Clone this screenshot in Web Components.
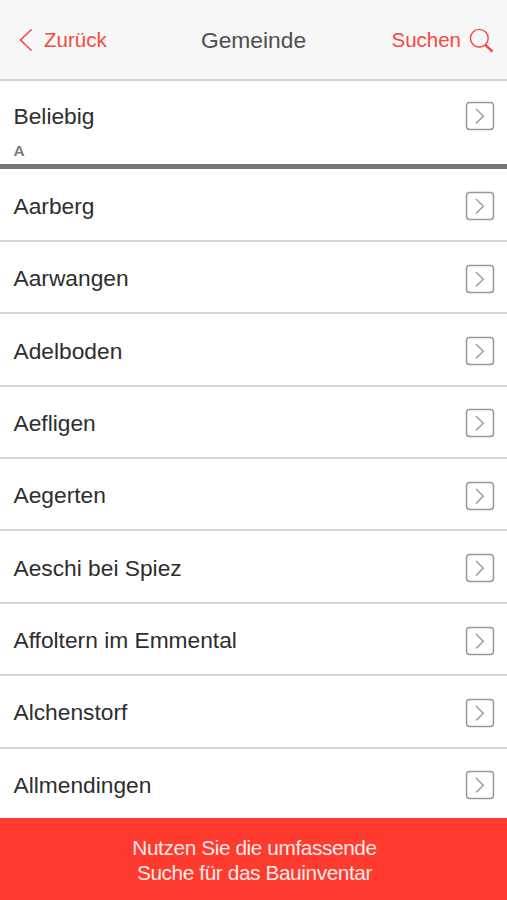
<!DOCTYPE html>
<html lang="de">
<head>
<meta charset="utf-8">
<title>Gemeinde</title>
<style>
  body {
    margin: 0;
    font-family: "Liberation Sans", Arial, sans-serif;
    background: #fff;
  }
</style>
</head>
<body>
<app-screen>
  <nav-header slot="header">
    <span slot="back">Zurück</span>
    <span slot="title">Gemeinde</span>
    <span slot="search">Suchen</span>
  </nav-header>
  <list-item plain>Beliebig</list-item>
  <list-divider>A</list-divider>
  <list-item>Aarberg</list-item>
  <list-item>Aarwangen</list-item>
  <list-item>Adelboden</list-item>
  <list-item>Aefligen</list-item>
  <list-item>Aegerten</list-item>
  <list-item>Aeschi bei Spiez</list-item>
  <list-item>Affoltern im Emmental</list-item>
  <list-item>Alchenstorf</list-item>
  <list-item>Allmendingen</list-item>
  <promo-banner slot="footer">Nutzen Sie die umfassende<br>Suche für das Bauinventar</promo-banner>
</app-screen>

<script>
class AppScreenElement extends HTMLElement {
  constructor() {
    super();

    this.attachShadow({ mode: "open" }).innerHTML = `
      <style>
        :host {
          display: flex;
          flex-direction: column;
          height: 900px;
          overflow: hidden;
        }

        main {
          flex: 1;
          min-height: 0;
          overflow: hidden;
        }
      </style>
      <slot name="header"></slot>
      <main><slot></slot></main>
      <slot name="footer"></slot>
    `;
  }
}

class NavHeaderElement extends HTMLElement {
  constructor() {
    super();

    this.attachShadow({ mode: "open" }).innerHTML = `
      <style>
        :host {
          display: grid;
          grid-template-columns: 1fr auto 1fr;
          align-items: center;
          box-sizing: border-box;
          flex: none;
          height: 81px;
          padding: 0 13px 0 19px;
          background: #f7f7f7;
          border-bottom: 2px solid #d2d2d2;
          color: #f8483e;
          font-size: 20.5px;
        }

        div {
          display: flex;
          align-items: center;
        }

        .title {
          margin: 2px 6px 0 0;
          color: #4f4f4f;
          font-size: 22.8px;
        }

        .back {
          gap: 11px;
        }

        .search {
          justify-content: flex-end;
          gap: 8px;
        }

        svg {
          fill: none;
          stroke: currentColor;
        }

        .search svg {
          margin-top: 2px;
        }
      </style>
      <div class="back">
        <svg width="14" height="24" viewBox="0 0 14 24" stroke-width="1.6"><path d="M12.5 1.5 1.5 12l11 10.5"/></svg>
        <slot name="back"></slot>
      </div>
      <div class="title"><slot name="title"></slot></div>
      <div class="search">
        <slot name="search"></slot>
        <svg width="25" height="25" viewBox="0 0 25 25"><circle cx="10.3" cy="10.3" r="8.9" stroke-width="1.4"/><path d="m16.2 16.8 7.3 6.9" stroke-width="2.4"/></svg>
      </div>
    `;
  }
}

class ListItemElement extends HTMLElement {
  constructor() {
    super();

    this.attachShadow({ mode: "open" }).innerHTML = `
      <style>
        :host {
          display: flex;
          align-items: center;
          justify-content: space-between;
          box-sizing: border-box;
          height: 72.375px;
          padding: 3px 12px 0 13.5px;
          border-bottom: 2px solid #d4d4d4;
          color: #2e2e2e;
          font-size: 22.75px;
        }

        :host([plain]) {
          height: 61px;
          padding-top: 9px;
          border-bottom: 0;
        }

        svg {
          fill: none;
          stroke: #999;
        }
      </style>
      <slot></slot>
      <svg width="30" height="30" viewBox="0 0 30 30">
        <rect x="1.5" y="1.5" width="27" height="27" rx="3.2" stroke-width="1.5"/>
        <path d="m11 8 7.3 7.2-7.3 7.2" stroke-width="1.4"/>
      </svg>
    `;
  }
}

class ListDividerElement extends HTMLElement {
  constructor() {
    super();

    this.attachShadow({ mode: "open" }).innerHTML = `
      <style>
        :host {
          display: block;
          box-sizing: border-box;
          height: 27px;
          margin-bottom: 0.6px;
          padding: 0 13.5px;
          border-bottom: 5px solid #757575;
          color: #7b7b7b;
          font-size: 15.5px;
          font-weight: bold;
          line-height: 18px;
        }
      </style>
      <slot></slot>
    `;
  }
}

class PromoBannerElement extends HTMLElement {
  constructor() {
    super();

    this.attachShadow({ mode: "open" }).innerHTML = `
      <style>
        :host {
          display: block;
          box-sizing: border-box;
          flex: none;
          height: 82px;
          padding: 17px 0 0 2px;
          background: #ff3b30;
          color: #ffeae6;
          font-size: 20.8px;
          letter-spacing: -0.4px;
          line-height: 25px;
          text-align: center;
        }
      </style>
      <slot></slot>
    `;
  }
}

window.customElements.define("app-screen", AppScreenElement);
window.customElements.define("nav-header", NavHeaderElement);
window.customElements.define("list-item", ListItemElement);
window.customElements.define("list-divider", ListDividerElement);
window.customElements.define("promo-banner", PromoBannerElement);
</script>
</body>
</html>
